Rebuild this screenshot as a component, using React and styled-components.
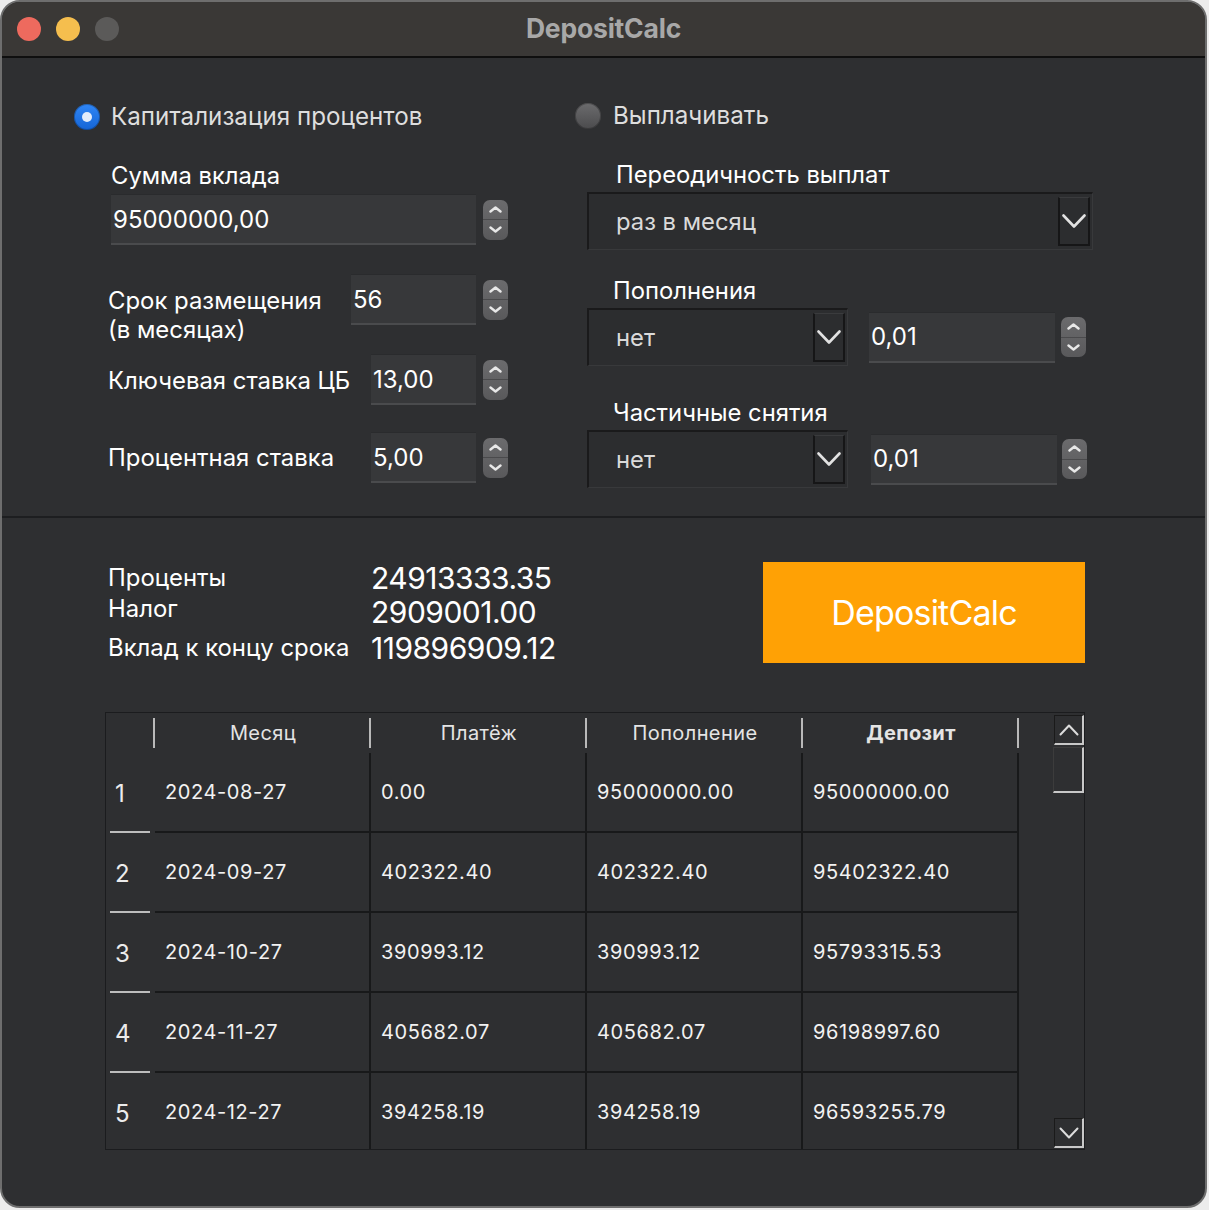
import React from "react";
import styled, { createGlobalStyle } from "styled-components";

const GlobalStyle = createGlobalStyle`
  html, body {
    margin: 0;
    padding: 0;
    background: #ececec;
  }
  body {
    font-family: Inter, "Liberation Sans", sans-serif;
  }
`;

const Window = styled.div`
  box-sizing: border-box;
  width: 1207px;
  height: 1208px;
  border: 2px solid #6e6e6e;
  border-radius: 20px;
  overflow: hidden;
  background: #2e2f31;
  display: flex;
  flex-direction: column;
`;

const TitleBar = styled.div`
  box-sizing: border-box;
  height: 56px;
  flex-shrink: 0;
  background: #3a3836;
  border-bottom: 2px solid #0f0f0f;
  display: grid;
  grid-template-columns: 1fr auto 1fr;
  align-items: center;
  padding: 0 15px 3px;
`;

const Lights = styled.div`
  display: flex;
  gap: 15px;
  margin-top: 2px;
`;

const Light = styled.span`
  width: 24px;
  height: 24px;
  border-radius: 50%;
  background: ${(p) => p.$color};
`;

const Title = styled.div`
  font-size: 26.5px;
  font-weight: 700;
  color: #a8a8a8;
  letter-spacing: -0.2px;
`;

const TopPanel = styled.div`
  height: 458px;
  flex-shrink: 0;
  border-bottom: 2px solid #1d1e20;
  display: grid;
  grid-template-columns: 501px 1fr;
  padding-left: 72px;
`;

const Column = styled.div`
  display: flex;
  flex-direction: column;
  align-items: flex-start;
`;

const RadioRow = styled.div`
  display: flex;
  align-items: center;
  gap: ${(p) => p.$gap}px;
  margin-top: ${(p) => p.$top}px;
`;

const Radio = styled.span`
  position: relative;
  width: 26px;
  height: 26px;
  border-radius: 50%;
  background: ${(p) =>
    p.$checked
      ? "linear-gradient(#2f86f6, #1565d6)"
      : "linear-gradient(#6c6c6e, #4b4b4d)"};
  box-shadow: inset 0 0 0 1px rgba(0, 0, 0, 0.25);
  &::after {
    content: "";
    display: ${(p) => (p.$checked ? "block" : "none")};
    position: absolute;
    left: 8px;
    top: 8px;
    width: 10px;
    height: 10px;
    border-radius: 50%;
    background: #e2ecfb;
  }
`;

const RadioLabel = styled.span`
  font-size: 24.2px;
  color: #dedede;
  line-height: 26px;
`;

const FieldLabel = styled.div`
  font-size: 23.8px;
  color: #ffffff;
  line-height: 30px;
  margin-top: ${(p) => p.$top}px;
  margin-left: ${(p) => p.$left}px;
`;

const SpinRow = styled.div`
  display: flex;
  align-items: center;
  gap: ${(p) => p.$gap || 7}px;
  margin-top: ${(p) => p.$top || 0}px;
  margin-left: ${(p) => p.$left || 0}px;
`;

const FieldRow = styled.div`
  display: flex;
  align-items: flex-start;
  height: 51px;
  margin-top: ${(p) => p.$top}px;
  margin-left: 34px;
`;

const RowLabel = styled.div`
  width: ${(p) => p.$w}px;
  flex-shrink: 0;
  font-size: 23.9px;
  line-height: 29px;
  color: #ffffff;
  padding-top: ${(p) => p.$pad}px;
`;

const SpinBox = styled.div`
  box-sizing: border-box;
  width: ${(p) => p.$w}px;
  height: 51px;
  background: #37383a;
  border-top: 1px solid #2a2b2d;
  border-bottom: 2px solid #4a4b4d;
  display: flex;
  align-items: center;
  padding-left: 2px;
  font-size: 24px;
  color: #ffffff;
`;

const StepperBox = styled.div`
  width: 25px;
  height: 40px;
  border-radius: 7px;
  background: linear-gradient(#6b6b6d, #59595b);
  display: flex;
  flex-direction: column;
  overflow: hidden;
`;

const StepHalf = styled.div`
  flex: 1;
  display: flex;
  align-items: center;
  justify-content: center;
  border-top: ${(p) => (p.$bottom ? "1px solid #4a4a4c" : "none")};
`;

const Combo = styled.div`
  box-sizing: border-box;
  width: ${(p) => p.$w}px;
  height: 58px;
  background: #2c2d2f;
  border-top: 2px solid #1a1a1b;
  border-left: 2px solid #1a1a1b;
  border-right: 1px solid #38393b;
  border-bottom: 1px solid #38393b;
  display: flex;
  align-items: center;
  justify-content: space-between;
  padding: 3px 2px 3px 27px;
  font-size: 23.8px;
  color: #dadada;
`;

const ComboButton = styled.div`
  box-sizing: border-box;
  width: 32px;
  height: 100%;
  border-left: 2px solid #161617;
  border-right: 2px solid #161617;
  border-bottom: 2px solid #161617;
  border-top: 1px solid #3a3b3d;
  display: flex;
  align-items: center;
  justify-content: center;
`;

const BottomPanel = styled.div`
  flex: 1;
  display: flex;
  flex-direction: column;
  padding: 44px 120px 0 103px;
`;

const ResultsRow = styled.div`
  display: flex;
  align-items: flex-start;
  justify-content: space-between;
  padding-left: 3px;
`;

const ResultGrid = styled.div`
  display: grid;
  grid-template-columns: 263px auto;
  grid-template-rows: 32px 36px 36px;
  align-items: center;
`;

const ResultLabel = styled.div`
  font-size: 23.9px;
  line-height: 28px;
  color: #ffffff;
  margin-top: ${(p) => p.$up || 0}px;
`;

const ResultValue = styled.div`
  font-size: 30px;
  line-height: 32px;
  color: #ffffff;
  letter-spacing: -0.5px;
`;

const CalcButton = styled.button`
  width: 322px;
  height: 101px;
  border: none;
  background: #ffa105;
  color: #ffffff;
  font-family: inherit;
  font-size: 34px;
  letter-spacing: -0.8px;
  padding: 0;
`;

const Table = styled.div`
  box-sizing: border-box;
  margin-top: 46px;
  width: 980px;
  height: 438px;
  border: 1px solid #1b1c1e;
  display: flex;
  overflow: hidden;
`;

const Grid = styled.div`
  display: grid;
  grid-template-columns: 49px repeat(4, 216px) 34px;
  grid-template-rows: 40px;
  grid-auto-rows: 80px;
  align-content: start;
`;

const HeadCell = styled.div`
  position: relative;
  display: flex;
  align-items: center;
  justify-content: center;
  font-size: 20px;
  letter-spacing: 0.4px;
  font-weight: ${(p) => (p.$bold ? 700 : 400)};
  color: #e4e4e4;
  &::after {
    content: "";
    display: ${(p) => (p.$sep ? "block" : "none")};
    position: absolute;
    right: 0;
    top: 5px;
    width: 2px;
    height: 30px;
    background: #b9b9b9;
  }
`;

const RowHead = styled.div`
  position: relative;
  display: flex;
  align-items: center;
  padding-left: 9px;
  font-size: 24px;
  color: #ececec;
  &::after {
    content: "";
    position: absolute;
    left: 4px;
    bottom: 0;
    width: 40px;
    height: 2px;
    background: #bdbdbd;
  }
`;

const Cell = styled.div`
  box-sizing: border-box;
  display: flex;
  align-items: center;
  padding-left: 10px;
  font-size: 20px;
  letter-spacing: 0.6px;
  color: #f2f2f2;
  border-bottom: 2px solid #18191a;
  border-right: 2px solid #18191a;
`;

const Filler = styled.div``;

const Scrollbar = styled.div`
  width: 32px;
  display: flex;
  flex-direction: column;
  padding-top: 2px;
`;

const ScrollButton = styled.div`
  box-sizing: border-box;
  width: 30px;
  height: 30px;
  margin-left: 1px;
  border-top: 1px solid #1a1a1a;
  border-left: 1px solid #1a1a1a;
  border-right: 2px solid #c8c8c8;
  border-bottom: 2px solid #c8c8c8;
  display: flex;
  align-items: center;
  justify-content: center;
  margin-top: ${(p) => (p.$down ? "auto" : "0")};
  margin-bottom: ${(p) => (p.$down ? "1px" : "0")};
`;

const ScrollHandle = styled.div`
  box-sizing: border-box;
  width: 31px;
  height: 46px;
  margin-top: 2px;
  border-top: 1px solid #3c3c3c;
  border-left: 1px solid #3c3c3c;
  border-right: 2px solid #c8c8c8;
  border-bottom: 2px solid #c8c8c8;
`;

const Chevron = ({ up, w = 12, h = 7, stroke = 2.4, color = "#e8e8e8" }) => (
  <svg width={w} height={h} viewBox={`0 0 ${w} ${h}`}>
    <polyline
      points={
        up
          ? `1.5,${h - 1.5} ${w / 2},1.5 ${w - 1.5},${h - 1.5}`
          : `1.5,1.5 ${w / 2},${h - 1.5} ${w - 1.5},1.5`
      }
      fill="none"
      stroke={color}
      strokeWidth={stroke}
      strokeLinecap="round"
      strokeLinejoin="round"
    />
  </svg>
);

const Stepper = () => (
  <StepperBox>
    <StepHalf>
      <Chevron up w={13} />
    </StepHalf>
    <StepHalf $bottom>
      <Chevron w={13} />
    </StepHalf>
  </StepperBox>
);

const Spin = ({ value, w, gap }) => (
  <SpinRow $gap={gap}>
    <SpinBox $w={w}>{value}</SpinBox>
    <Stepper />
  </SpinRow>
);

const Select = ({ value, w }) => (
  <Combo $w={w}>
    <span>{value}</span>
    <ComboButton>
      <Chevron w={24} h={14} stroke={2.6} color="#e2e2e2" />
    </ComboButton>
  </Combo>
);

const rows = [
  ["1", "2024-08-27", "0.00", "95000000.00", "95000000.00"],
  ["2", "2024-09-27", "402322.40", "402322.40", "95402322.40"],
  ["3", "2024-10-27", "390993.12", "390993.12", "95793315.53"],
  ["4", "2024-11-27", "405682.07", "405682.07", "96198997.60"],
  ["5", "2024-12-27", "394258.19", "394258.19", "96593255.79"],
];

export default function App() {
  return (
    <>
      <GlobalStyle />
      <Window>
        <TitleBar>
          <Lights>
            <Light $color="#ee6a5e" />
            <Light $color="#f5be4e" />
            <Light $color="#5b5a59" />
          </Lights>
          <Title>DepositCalc</Title>
          <div />
        </TitleBar>

        <TopPanel>
          <Column>
            <RadioRow $top={46} $gap={11}>
              <Radio $checked />
              <RadioLabel>Капитализация процентов</RadioLabel>
            </RadioRow>
            <FieldLabel $top={31} $left={37}>Сумма вклада</FieldLabel>
            <SpinRow $top={3} $left={37}>
              <SpinBox $w={365}>95000000,00</SpinBox>
              <Stepper />
            </SpinRow>
            <FieldRow $top={29}>
              <RowLabel $w={243} $pad={12}>
                Срок размещения
                <br />
                (в месяцах)
              </RowLabel>
              <Spin value="56" w={125} />
            </FieldRow>
            <FieldRow $top={29}>
              <RowLabel $w={263} $pad={12}>Ключевая ставка ЦБ</RowLabel>
              <Spin value="13,00" w={105} />
            </FieldRow>
            <FieldRow $top={27}>
              <RowLabel $w={263} $pad={11}>Процентная ставка</RowLabel>
              <Spin value="5,00" w={105} />
            </FieldRow>
          </Column>

          <Column>
            <RadioRow $top={45} $gap={12}>
              <Radio />
              <RadioLabel>Выплачивать</RadioLabel>
            </RadioRow>
            <FieldLabel $top={31} $left={41}>Переодичность выплат</FieldLabel>
            <SpinRow $top={2} $left={12}>
              <Select value="раз в месяц" w={506} />
            </SpinRow>
            <FieldLabel $top={26} $left={38}>Пополнения</FieldLabel>
            <SpinRow $top={2} $left={12} $gap={21}>
              <Select value="нет" w={261} />
              <Spin value="0,01" w={186} gap={6} />
            </SpinRow>
            <FieldLabel $top={32} $left={38}>Частичные снятия</FieldLabel>
            <SpinRow $top={2} $left={12} $gap={23}>
              <Select value="нет" w={261} />
              <Spin value="0,01" w={186} gap={5} />
            </SpinRow>
          </Column>
        </TopPanel>

        <BottomPanel>
          <ResultsRow>
            <ResultGrid>
              <ResultLabel>Проценты</ResultLabel>
              <ResultValue>24913333.35</ResultValue>
              <ResultLabel $up={-6}>Налог</ResultLabel>
              <ResultValue>2909001.00</ResultValue>
              <ResultLabel>Вклад к концу срока</ResultLabel>
              <ResultValue>119896909.12</ResultValue>
            </ResultGrid>
            <CalcButton>DepositCalc</CalcButton>
          </ResultsRow>

          <Table>
            <Grid>
              <HeadCell $sep />
              <HeadCell $sep>Месяц</HeadCell>
              <HeadCell $sep>Платёж</HeadCell>
              <HeadCell $sep>Пополнение</HeadCell>
              <HeadCell $sep $bold>Депозит</HeadCell>
              <Filler />
              {rows.map((r) => (
                <React.Fragment key={r[0]}>
                  <RowHead>{r[0]}</RowHead>
                  <Cell>{r[1]}</Cell>
                  <Cell>{r[2]}</Cell>
                  <Cell>{r[3]}</Cell>
                  <Cell>{r[4]}</Cell>
                  <Filler />
                </React.Fragment>
              ))}
            </Grid>
            <Scrollbar>
              <ScrollButton>
                <Chevron up w={20} h={12} stroke={2} color="#dcdcdc" />
              </ScrollButton>
              <ScrollHandle />
              <ScrollButton $down>
                <Chevron w={20} h={12} stroke={2} color="#dcdcdc" />
              </ScrollButton>
            </Scrollbar>
          </Table>
        </BottomPanel>
      </Window>
    </>
  );
}
